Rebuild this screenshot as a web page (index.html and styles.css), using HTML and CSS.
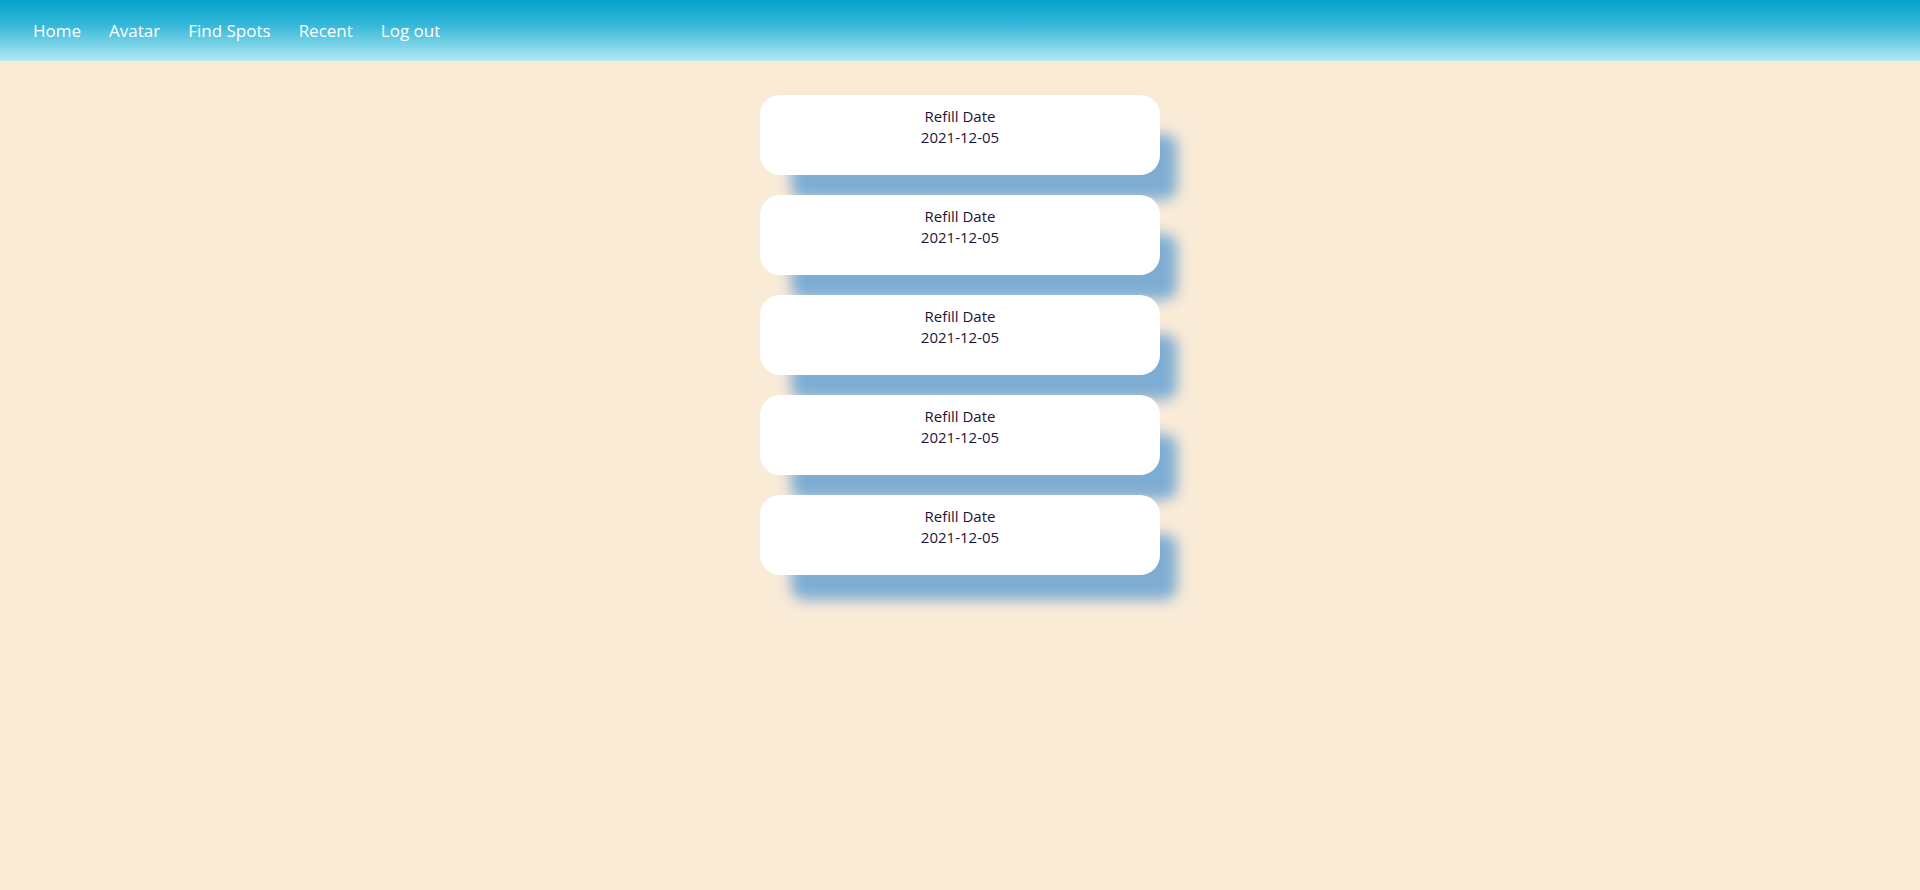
FILE: index.html
```html
<!DOCTYPE html>
<html>
<head>
<meta charset="utf-8">
<link rel="stylesheet" href="styles.css">
</head>
<body>
<nav class="nav">
  <a class="nav-link" href="#">Home</a>
  <a class="nav-link" href="#">Avatar</a>
  <a class="nav-link" href="#">Find Spots</a>
  <a class="nav-link" href="#">Recent</a>
  <a class="nav-link" href="#">Log out</a>
</nav>
<main class="list">
  <div class="card"><div class="label">Refill Date</div><div class="date">2021-12-05</div></div>
  <div class="card"><div class="label">Refill Date</div><div class="date">2021-12-05</div></div>
  <div class="card"><div class="label">Refill Date</div><div class="date">2021-12-05</div></div>
  <div class="card"><div class="label">Refill Date</div><div class="date">2021-12-05</div></div>
  <div class="card"><div class="label">Refill Date</div><div class="date">2021-12-05</div></div>
</main>
</body>
</html>
```
FILE: styles.css
```css
html, body {
  margin: 0;
  padding: 0;
}
body {
  background: #faebd7;
  font-family: "Open Sans", "Noto Sans", sans-serif;
  min-height: 890px;
}
.nav {
  height: 61px;
  box-sizing: border-box;
  background: linear-gradient(to bottom, #04a4cc 0%, #33b7d9 40%, #b2e9f2 100%);
  display: flex;
  align-items: center;
  gap: 28px;
  padding: 0 0 0 33px;
}
.nav-link {
  color: #ffffff;
  text-decoration: none;
  font-size: 17px;
  line-height: 20px;
}
.list {
  display: flex;
  flex-direction: column;
  align-items: center;
  gap: 20px;
  padding-top: 34px;
}
.card {
  width: 400px;
  height: 80px;
  box-sizing: border-box;
  background: #ffffff;
  border-radius: 20px;
  box-shadow: 24px 32px 14px -7px #7eadd4;
  text-align: center;
  padding-top: 11px;
  color: #1a1538;
  font-size: 15px;
  line-height: 20.5px;
}
```
